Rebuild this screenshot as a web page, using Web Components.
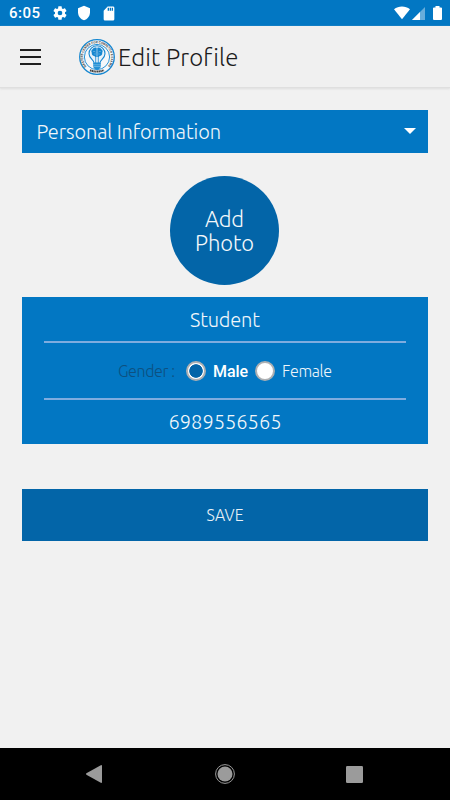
<!DOCTYPE html>
<html lang="en">
<head>
<meta charset="utf-8">
<title>Edit Profile</title>
<style>
html,body{margin:0;height:100%;background:#f1f1f1;overflow:hidden}
</style>
</head>
<body>
<profile-screen></profile-screen>
<script>
const define=(name,html,init)=>customElements.define(name,class extends HTMLElement{
  constructor(){super();this.attachShadow({mode:'open'}).innerHTML=html;}
  connectedCallback(){if(init)init.call(this);}
});

define('status-bar',`<style>
:host{display:flex;height:26px;box-sizing:border-box;background:#0277c3;color:#fff;align-items:center;padding:0 8px 0 9px;font:500 15px Roboto,sans-serif}
svg{display:block;fill:#fff}.gap{flex:1}
</style>
<fit-text width="31" style="margin-top:1px">6:05</fit-text>
<svg style="margin-left:12px" width="16" height="16" viewBox="0 0 24 24"><path d="M19.43 12.98c.04-.32.07-.64.07-.98s-.03-.66-.07-.98l2.11-1.65c.19-.15.24-.42.12-.64l-2-3.46c-.12-.22-.39-.3-.61-.22l-2.49 1c-.52-.4-1.08-.73-1.69-.98l-.38-2.65A.49.49 0 0 0 14 2h-4c-.25 0-.46.18-.49.42l-.38 2.65c-.61.25-1.17.59-1.69.98l-2.49-1c-.23-.09-.49 0-.61.22l-2 3.46c-.13.22-.07.49.12.64l2.11 1.65c-.04.32-.07.65-.07.98s.03.66.07.98l-2.11 1.65c-.19.15-.24.42-.12.64l2 3.46c.12.22.39.3.61.22l2.49-1c.52.4 1.08.73 1.69.98l.38 2.65c.03.24.24.42.49.42h4c.25 0 .46-.18.49-.42l.38-2.65c.61-.25 1.17-.59 1.69-.98l2.49 1c.23.09.49 0 .61-.22l2-3.46c.12-.22.07-.49-.12-.64zM12 15.5a3.5 3.5 0 1 1 0-7 3.5 3.5 0 0 1 0 7z"/></svg>
<svg style="margin-left:8px" width="16" height="16" viewBox="0 0 24 24"><path d="M12 1 3 5v6c0 5.550 3.840 10.740 9 12 5.160-1.260 9-6.450 9-12V5z"/></svg>
<svg style="margin-left:8.500px" width="16" height="17" viewBox="0 0 24 24" preserveAspectRatio="none"><path d="M18 2h-8L4 8v12a2 2 0 0 0 2 2h12a2 2 0 0 0 2-2V4a2 2 0 0 0-2-2zm-6 6h-2V4h2zm3 0h-2V4h2zm3 0h-2V4h2z"/></svg>
<span class="gap"></span>
<svg width="16" height="14" viewBox="0 0 16 14"><path d="M0 3.300C4.600-.500 11.400-.500 16 3.300L8 13.300z"/></svg>
<svg style="margin-left:2px" width="13" height="13" viewBox="0 0 13 13"><path d="M0 13 13 0v13z" opacity=".4"/><path d="M0 13 8 5v8z"/></svg>
<svg style="margin-left:8px" width="9" height="14" viewBox="0 0 9 15" preserveAspectRatio="none"><path d="M2.500 1.500V0h4v1.500H8q1 0 1 1V14q0 1-1 1H1q-1 0-1-1V2.500q0-1 1-1z"/></svg>`);

define('brand-logo',`<style>:host{display:block;width:36px;height:36px}svg{display:block}text{font:bold 3.400px "Liberation Sans",sans-serif;fill:#333}</style>
<svg width="36" height="36" viewBox="0 0 36 36"><circle cx="18" cy="18" r="17.300" fill="#f7f8fa" stroke="#1687d0" stroke-width="1.300"/>
<circle cx="18" cy="18" r="12.600" fill="#f5f7f9" stroke="#2a93d6" stroke-width="1"/>
<path id="a" d="M7.500 27.500A14 14 0 1 1 28.500 27.500" fill="none"/>
<text textLength="63" lengthAdjust="spacingAndGlyphs"><textPath href="#a">MASTERS CENTER FOR COMPETITIVE EXAMS</textPath></text>
<path d="M11 31.200Q18 34 25 31.200" fill="none" stroke="#444" stroke-width="2" stroke-dasharray="1.400 .35"/>
<path d="M15 24c0-3-5-4.500-5-9.200a8 8 0 0 1 16 0c0 4.700-5 6.200-5 9.200z" fill="#e7f2fa" stroke="#1687d0" stroke-width="1.100"/>
<path d="M17.700 8.800c-1.900-1-3.500 0-3.800 1.300-1.700.8-1.900 2.500-1.100 3.700-.4 1.900.9 3.200 2.500 3.200.6 1.100 1.700 1.300 2.400.9zm.6 0c1.900-1 3.500 0 3.800 1.300 1.700.8 1.900 2.500 1.100 3.700.4 1.900-.9 3.200-2.500 3.200-.6 1.100-1.700 1.300-2.400.9z" fill="#1687d0"/>
<path d="M14 12.500h2l1 1m5-1h-2l-1 1M15 15h2m4 0h-2" stroke="#a5d0ec" stroke-width=".4" fill="none"/>
<path d="M16.700 17v7m2.600-7v7" stroke="#1687d0" stroke-width=".8"/><path d="M14.200 24h7.600v4l-1.800 2.200h-4L14.200 28z" fill="#1f8fd5"/><path d="M14.200 25.800h7.600m-7.600 1.800h7.600" stroke="#d5eaf8" stroke-width=".4"/></svg>`);

define('app-bar',`<style>
:host{display:flex;align-items:center;height:62px;box-sizing:border-box;padding:0 20px;background:#f0f0f0;border-bottom:1px solid #dfdfdf;box-shadow:0 1px 2px #ddd;color:#1c1c1c;font:300 24px Ubuntu,"Noto Sans","Open Sans",sans-serif}
.menu{display:grid;gap:5px;width:21px;margin-right:38px}.menu i{height:2px;background:#202020}
::slotted(fit-text){margin:2px 0 0 3px}
</style><div class="menu"><i></i><i></i><i></i></div><brand-logo></brand-logo><slot></slot>`);

define('section-select',`<style>
:host{display:flex;align-items:center;justify-content:space-between;height:43px;padding:0 12px 0 14.500px;background:#0277c3;color:#f2f7fb;font:300 20px Ubuntu,"Noto Sans","Open Sans",sans-serif;box-sizing:border-box}
svg{display:block;margin-bottom:1px}
</style><slot></slot><svg width="12" height="6" viewBox="0 0 12 6"><path d="M0 0h12L6 6z" fill="#fff"/></svg>`);

define('photo-button',`<style>
:host{display:flex;flex-direction:column;align-items:center;justify-content:center;gap:2px;width:109px;height:109px;border-radius:50%;background:#0365a8;color:#f4f8fb;font:300 22px Ubuntu,"Noto Sans","Open Sans",sans-serif}
</style><slot></slot>`);

define('radio-option',`<style>
:host{display:flex;align-items:center;gap:7px;font:300 16px Ubuntu,"Noto Sans","Open Sans",sans-serif;color:#eef5fa}
:host([checked]){font:500 16px Roboto,sans-serif;color:#fff}
:host([checked]) ::slotted(fit-text){margin-top:1px}
i{box-sizing:border-box;width:20px;height:20px;border-radius:50%;border:2px solid #aeb0b2;background:#fff}
:host([checked]) i{background:radial-gradient(circle,#0365a8 6.400px,#fff 7.100px)}
</style><i></i><slot></slot>`);

define('details-card',`<style>
:host{display:flex;flex-direction:column;height:147px;padding:0 22px;background:#0277c3;color:#f2f7fb;font:300 20px Ubuntu,"Noto Sans","Open Sans",sans-serif;box-sizing:border-box}
div{display:flex;align-items:center;justify-content:center;box-sizing:border-box}
.a{height:46px;border-bottom:2px solid #7facdf}.b{height:57px;border-bottom:2px solid #7facdf;font-size:16px;color:#0d5080}.c{height:44px;padding-bottom:1px}
.a{padding-top:2px}.b{padding-top:1px}
</style><div class="a"><slot name="role"></slot></div><div class="b"><slot name="gender"></slot></div><div class="c"><slot name="phone"></slot></div>`);

define('save-button',`<style>:host{display:flex;align-items:center;justify-content:center;height:52px;box-sizing:border-box;background:#0365a8;color:#e8f1f7;font:300 16px Ubuntu,"Noto Sans","Open Sans",sans-serif}</style><slot></slot>`);

define('nav-bar',`<style>:host{display:flex;align-items:center;justify-content:space-between;height:52px;padding:0 87px 0 86px;background:#000;box-sizing:border-box}svg{display:block;fill:#9b9b9b}svg:nth-of-type(2){margin-left:2px}</style>
<svg width="16" height="18" viewBox="0 0 16 18"><path d="M.400 8.300 14.800.200Q16-.300 16 1v16q0 1.300-1.200.800L.400 9.700Q-.300 9 .400 8.300z"/></svg>
<svg width="20" height="20" viewBox="0 0 20 20"><circle cx="10" cy="10" r="9.400" fill="none" stroke="#9b9b9b"/><circle cx="10" cy="10" r="7.500"/></svg>
<svg width="17" height="17" viewBox="0 0 17 17"><rect width="17" height="17" rx="1.200"/></svg>`);

define('profile-screen',`<style>
:host{display:flex;flex-direction:column;width:450px;height:800px;background:#f1f1f1}
main{flex:1;display:flex;flex-direction:column;padding:22px 22px 0}
photo-button{align-self:center;margin:23px 1px 12px 0}
save-button{margin-top:45px}
.g{display:flex;align-items:center}
.g radio-option:nth-child(2){margin:0 7px 0 11px}
</style>
<status-bar></status-bar><app-bar><fit-text width="119.500">Edit Profile</fit-text></app-bar>
<main>
<section-select><fit-text width="184.500">Personal Information</fit-text></section-select>
<photo-button><fit-text width="39">Add</fit-text><fit-text width="59">Photo</fit-text></photo-button>
<details-card><fit-text slot="role" width="70">Student</fit-text>
<div class="g" slot="gender"><fit-text width="57">Gender :</fit-text><radio-option checked><fit-text width="35">Male</fit-text></radio-option><radio-option><fit-text width="50">Female</fit-text></radio-option></div>
<fit-text slot="phone" width="113">6989556565</fit-text></details-card>
<save-button><fit-text width="37">SAVE</fit-text></save-button>
</main><nav-bar></nav-bar>`);

/* One line of text whose tracking is set so that it fills the given width.
   Defined last, so that the inherited font is already in effect when it measures. */
define('fit-text',`<style>:host{display:block;white-space:nowrap;width:max-content;line-height:1}span{display:inline-block}</style><span><slot></slot></span>`,function(){
  const s=this.shadowRoot.querySelector('span'),n=this.textContent.length;
  const w=s.getBoundingClientRect().width,t=+this.getAttribute('width');
  const ls=(t-w)/(n-1);
  s.style.letterSpacing=ls+'px';s.style.marginRight=-ls+'px';
});
</script>
</body>
</html>
